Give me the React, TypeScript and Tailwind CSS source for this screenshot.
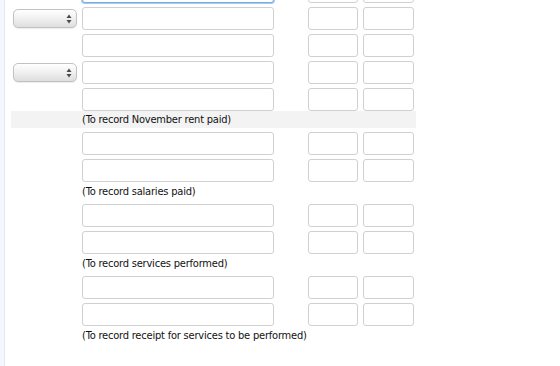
import React from "react";

const font = {
  fontFamily: 'Tahoma, "DejaVu Sans Condensed", "DejaVu Sans", sans-serif',
  letterSpacing: "-0.2px",
};

function Select() {
  return (
    <div className="relative h-[19px] w-[64px] rounded-[5px] border border-[#c2c2c2] bg-gradient-to-b from-[#ffffff] via-[#f0f0f0] to-[#dedede] shadow-[0_1px_1px_rgba(0,0,0,0.08)]">
      <svg className="absolute right-[4px] top-[4px]" width="6" height="10" viewBox="0 0 6 10">
        <path d="M3 0.5 L5.5 4 L0.5 4 Z" fill="#4a4a4a" />
        <path d="M3 9.5 L5.5 6 L0.5 6 Z" fill="#4a4a4a" />
      </svg>
    </div>
  );
}

function Box({ w, focus }: { w: string; focus?: boolean }) {
  return (
    <div
      className={
        "h-[23px] rounded-[3px] border bg-white " +
        w +
        (focus ? " border-[#7aa9e4] shadow-[0_0_0_1px_#a9c8f0]" : " border-[#d0d0d0]")
      }
    />
  );
}

function Row({ select, focus, last }: { select?: boolean; focus?: boolean; last?: boolean }) {
  return (
    <div className={"flex items-start " + (last ? "" : "pb-[4px]")}>
      <div className="flex h-[23px] w-[71px] items-center pl-[2px]">{select ? <Select /> : null}</div>
      <Box w="w-[192px]" focus={focus} />
      <div className="ml-[34px]">
        <Box w="w-[50px]" />
      </div>
      <div className="ml-[5px]">
        <Box w="w-[51px]" />
      </div>
    </div>
  );
}

function Label({ text, shaded }: { text: string; shaded?: boolean }) {
  return (
    <div
      className={
        "flex items-center pl-[71px] text-[11px] text-[#111] mb-[4px] " +
        (shaded ? "h-[17px] pt-[2px] bg-[#f3f3f3]" : "h-[18px] pt-[3px]")
      }
      style={font}
    >
      {text}
    </div>
  );
}

export default function App() {
  return (
    <div className="flex h-[366px] w-[560px] overflow-hidden bg-white">
      <div className="h-full w-[5px] shrink-0 border-r border-[#e3e9f0] bg-[#f4f7fb]" />
      <div className="ml-[6px] w-[405px] -mt-[20px]">
        <Row focus />
        <Row select />
        <Row />
        <Row select />
        <Row last />
        <Label text="(To record November rent paid)" shaded />
        <Row />
        <Row last />
        <Label text="(To record salaries paid)" />
        <Row />
        <Row last />
        <Label text="(To record services performed)" />
        <Row />
        <Row last />
        <Label text="(To record receipt for services to be performed)" />
      </div>
    </div>
  );
}
